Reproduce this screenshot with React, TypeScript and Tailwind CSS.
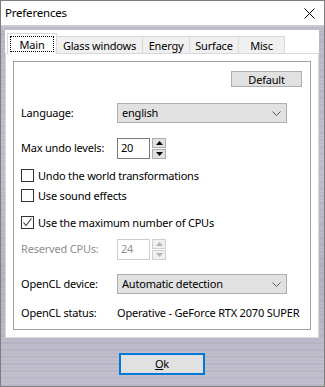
import React from "react";

const font = { fontFamily: '"Noto Sans", "Open Sans", Arial, sans-serif' };

const Spinner = ({ disabled }: { disabled?: boolean }) => {
  const c = disabled ? "#b5b5b5" : "#000";
  const b = disabled ? "border-[#cfcfcf] bg-[#f0f0f0]" : "border-[#adadad] bg-[#e1e1e1]";
  return (
    <div className="ml-[2px] flex h-[21px] w-[14px] shrink-0 flex-col justify-between">
      <div className={`flex h-[10px] items-center justify-center border ${b}`}>
        <svg width="7" height="4" viewBox="0 0 7 4">
          <polygon points="0,4 7,4 3.5,0" fill={c} />
        </svg>
      </div>
      <div className={`flex h-[10px] items-center justify-center border ${b}`}>
        <svg width="7" height="4" viewBox="0 0 7 4">
          <polygon points="0,0 7,0 3.5,4" fill={c} />
        </svg>
      </div>
    </div>
  );
};

const Combo = ({ value }: { value: string }) => (
  <div className="flex h-[20px] w-[170px] shrink-0 items-center justify-between border border-[#adadad] bg-[#e1e1e1] pl-[4px] pr-[5px]">
    <span>{value}</span>
    <svg width="9" height="5" viewBox="0 0 9 5">
      <polyline points="0.5,0.5 4.5,4.5 8.5,0.5" fill="none" stroke="#5a5a5a" strokeWidth="1" />
    </svg>
  </div>
);

const Check = ({ checked, label, className }: { checked?: boolean; label: string; className: string }) => (
  <div className={`flex h-[13px] items-center ${className}`}>
    <div className="flex h-[13px] w-[13px] items-center justify-center border border-[#333] bg-white">
      {checked && (
        <svg width="11" height="11" viewBox="0 0 11 11">
          <polyline points="1.5,5.5 4,8.5 9.5,1.5" fill="none" stroke="#333" strokeWidth="1.1" />
        </svg>
      )}
    </div>
    <span className="ml-[4px] leading-none">{label}</span>
  </div>
);

const tabs = [
  { name: "Glass windows", w: "w-[87px]" },
  { name: "Energy", w: "w-[48px]" },
  { name: "Surface", w: "w-[50px]" },
  { name: "Misc", w: "w-[47px]" },
];

export default function App() {
  return (
    <div
      className="flex h-[387px] w-[325px] flex-col overflow-hidden whitespace-nowrap border border-[#7d7d7d] text-[11px] tracking-[-0.2px] text-black"
      style={font}
    >
      <div className="flex h-[24px] shrink-0 items-center justify-between bg-white pl-[4px] pr-[9px]">
        <span className="text-[11.5px]">Preferences</span>
        <svg width="11" height="11" viewBox="0 0 11 11">
          <path d="M0.5 0.5 L10.5 10.5 M10.5 0.5 L0.5 10.5" stroke="#000" strokeWidth="1" />
        </svg>
      </div>

      <div className="flex flex-1 flex-col bg-[repeating-linear-gradient(180deg,rgba(255,255,255,0.08)_0px,rgba(255,255,255,0)_2px,rgba(0,0,0,0.05)_3px,rgba(255,255,255,0.1)_5px,rgba(0,0,0,0.03)_7px),linear-gradient(180deg,#cac9d4_0px,#b9b8c6_6px,#bebdcb_40%,#b3b1c1_70%,#c0becc_100%)] pl-[4px] pr-[5px] pt-[5px]">
        <div className="flex w-[314px] flex-col bg-white">
          <div className="flex h-[23px] items-end pl-[2px]">
            <div className="relative z-10 mb-[-1px] flex h-[21px] w-[50px] items-start justify-center border border-b-0 border-[#d9d9d9] bg-white pt-[2px]">
              <span className="flex h-[16px] w-[44px] items-center justify-center border border-dotted border-black leading-none">
                Main
              </span>
            </div>
            {tabs.map((t) => (
              <div
                key={t.name}
                className={`flex h-[17px] ${t.w} -ml-px items-center justify-center border border-b-0 border-[#d9d9d9] bg-[#f0f0f0] leading-none`}
              >
                {t.name}
              </div>
            ))}
          </div>

          <div className="h-[285px] border border-[#d9d9d9] p-[7px]">
            <div className="flex h-[269px] w-[298px] flex-col border border-[#a0a0a0] px-[7px]">
              <div className="mt-[9px] flex justify-end pr-[1px]">
                <div className="flex h-[16px] w-[71px] items-center justify-center border border-[#adadad] bg-[#e1e1e1] leading-none">
                  Default
                </div>
              </div>

              <div className="mt-[16px] flex items-center">
                <span className="w-[96px] shrink-0">Language:</span>
                <Combo value="english" />
              </div>

              <div className="mt-[15px] flex items-center">
                <span className="w-[96px] shrink-0">Max undo levels:</span>
                <div className="flex h-[21px] w-[33px] shrink-0 items-center border border-[#7a7a7a] bg-white pl-[3px]">20</div>
                <Spinner />
              </div>

              <Check label="Undo the world transformations" className="mt-[10px]" />
              <Check label="Use sound effects" className="mt-[7px]" />
              <Check checked label="Use the maximum number of CPUs" className="mt-[14px]" />

              <div className="mt-[10px] flex items-center text-[#8f8f8f]">
                <span className="w-[96px] shrink-0">Reserved CPUs:</span>
                <div className="flex h-[21px] w-[33px] shrink-0 items-center border border-[#cccccc] bg-white pl-[3px]">24</div>
                <Spinner disabled />
              </div>

              <div className="mt-[14px] flex items-center">
                <span className="w-[96px] shrink-0">OpenCL device:</span>
                <Combo value="Automatic detection" />
              </div>

              <div className="mt-[9px] flex h-[20px] items-center">
                <span className="w-[96px] shrink-0">OpenCL status:</span>
                <span className="shrink-0">Operative - GeForce RTX 2070 SUPER</span>
              </div>
            </div>
          </div>
        </div>

        <div className="mt-[15px] flex justify-center">
          <div className="flex h-[22px] w-[86px] items-center justify-center border-2 border-[#0078d7] bg-[#e1e1e1]">
            <span>
              <span className="underline">O</span>k
            </span>
          </div>
        </div>
      </div>
    </div>
  );
}
